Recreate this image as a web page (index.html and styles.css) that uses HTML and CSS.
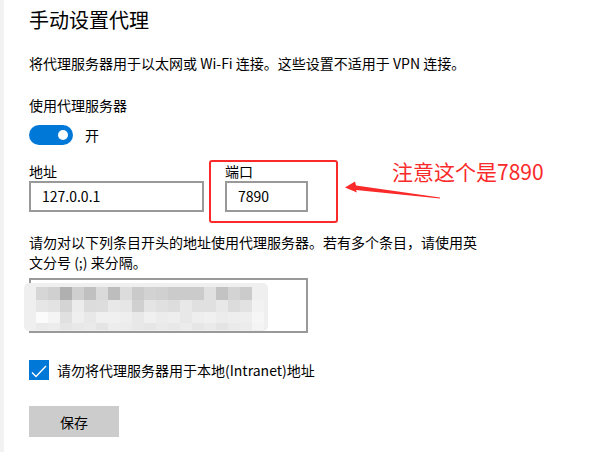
FILE: index.html
```html
<!DOCTYPE html>
<html lang="zh-CN">
<head>
    <meta charset="UTF-8">
    <title>手动设置代理</title>
    <link rel="stylesheet" href="styles.css">
</head>
<body>
<div class="page">
    <h1 class="title">手动设置代理</h1>
    <p class="desc">将代理服务器用于以太网或 Wi-Fi 连接。这些设置不适用于 VPN 连接。</p>

    <div class="label">使用代理服务器</div>
    <div class="toggle-row">
        <span class="toggle"><span class="knob"></span></span>
        <span>开</span>
    </div>

    <div class="fields">
        <div class="field">
            <div class="field-label">地址</div>
            <div class="input address">127.0.0.1</div>
        </div>
        <div class="field port">
            <div class="field-label">端口</div>
            <div class="input port-input">7890</div>
            <div class="mark-box"></div>
        </div>

        <svg class="arrow" width="105" height="30" viewBox="0 0 105 30">
            <polygon points="5,12.5 15,6.5 16,10.5 100,22.6 100,23.6 16,15 17,17.5" fill="#fa2a2a"/>
        </svg>
        <span class="note">注意这个是7890</span>
    </div>

    <p class="desc2">请勿对以下列条目开头的地址使用代理服务器。若有多个条目，请使用英文分号 (;) 来分隔。</p>

    <div class="exceptions">
        <svg class="mosaic" width="246" height="50" viewBox="0 0 246 50">
            <rect x="0" y="1" width="244" height="48" rx="5" fill="#efefef"/>
            <g>
                <rect x="12" y="5" width="12" height="13" fill="#d6d6d6"/>
                <rect x="24" y="5" width="12" height="13" fill="#d0d0d0"/>
                <rect x="36" y="5" width="12" height="13" fill="#b0b0b0"/>
                <rect x="48" y="5" width="12" height="13" fill="#cfcfcf"/>
                <rect x="60" y="5" width="12" height="13" fill="#c0c0c0"/>
                <rect x="72" y="5" width="12" height="13" fill="#dadada"/>
                <rect x="84" y="5" width="12" height="13" fill="#bdbdbd"/>
                <rect x="96" y="5" width="12" height="13" fill="#dcdcdc"/>
                <rect x="108" y="5" width="12" height="13" fill="#cacaca"/>
                <rect x="120" y="5" width="12" height="13" fill="#d2d2d2"/>
                <rect x="132" y="5" width="12" height="13" fill="#d0d0d0"/>
                <rect x="144" y="5" width="12" height="13" fill="#cbcbcb"/>
                <rect x="156" y="5" width="12" height="13" fill="#cbcbcb"/>
                <rect x="168" y="5" width="12" height="13" fill="#cbcbcb"/>
                <rect x="180" y="5" width="12" height="13" fill="#e0e0e0"/>
                <rect x="192" y="5" width="12" height="13" fill="#c3c3c3"/>
                <rect x="204" y="5" width="12" height="13" fill="#d3d3d3"/>
                <rect x="216" y="5" width="12" height="13" fill="#cbcbcb"/>
                <rect x="228" y="5" width="12" height="13" fill="#efefef"/>
            </g>
            <g>
                <rect x="12" y="18" width="12" height="12" fill="#e6e6e6"/>
                <rect x="24" y="18" width="12" height="12" fill="#e3e3e3"/>
                <rect x="36" y="18" width="12" height="12" fill="#d4d4d4"/>
                <rect x="48" y="18" width="12" height="12" fill="#ececec"/>
                <rect x="60" y="18" width="12" height="12" fill="#dcdcdc"/>
                <rect x="72" y="18" width="12" height="12" fill="#dddddd"/>
                <rect x="84" y="18" width="12" height="12" fill="#e8e8e8"/>
                <rect x="96" y="18" width="12" height="12" fill="#e6e6e6"/>
                <rect x="108" y="18" width="12" height="12" fill="#d0d0d0"/>
                <rect x="120" y="18" width="12" height="12" fill="#e4e4e4"/>
                <rect x="132" y="18" width="12" height="12" fill="#e0e0e0"/>
                <rect x="144" y="18" width="12" height="12" fill="#dddddd"/>
                <rect x="156" y="18" width="12" height="12" fill="#e8e8e8"/>
                <rect x="168" y="18" width="12" height="12" fill="#e0e0e0"/>
                <rect x="180" y="18" width="12" height="12" fill="#e0e0e0"/>
                <rect x="192" y="18" width="12" height="12" fill="#e8e8e8"/>
                <rect x="204" y="18" width="12" height="12" fill="#dcdcdc"/>
                <rect x="216" y="18" width="12" height="12" fill="#e2e2e2"/>
                <rect x="228" y="18" width="12" height="12" fill="#f2f2f2"/>
            </g>
            <g>
                <rect x="12" y="30" width="12" height="11" fill="#fbfbfb"/>
                <rect x="24" y="30" width="12" height="11" fill="#f4f4f4"/>
                <rect x="36" y="30" width="12" height="11" fill="#e0e0e0"/>
                <rect x="48" y="30" width="12" height="11" fill="#efefef"/>
                <rect x="60" y="30" width="12" height="11" fill="#e8e8e8"/>
                <rect x="72" y="30" width="12" height="11" fill="#f0f0f0"/>
                <rect x="84" y="30" width="12" height="11" fill="#f0f0f0"/>
                <rect x="96" y="30" width="12" height="11" fill="#eeeeee"/>
                <rect x="108" y="30" width="12" height="11" fill="#e8e8e8"/>
                <rect x="120" y="30" width="12" height="11" fill="#f0f0f0"/>
                <rect x="132" y="30" width="12" height="11" fill="#ececec"/>
                <rect x="144" y="30" width="12" height="11" fill="#eeeeee"/>
                <rect x="156" y="30" width="12" height="11" fill="#e8e8e8"/>
                <rect x="168" y="30" width="12" height="11" fill="#eeeeee"/>
                <rect x="180" y="30" width="12" height="11" fill="#f0f0f0"/>
                <rect x="192" y="30" width="12" height="11" fill="#ececec"/>
                <rect x="204" y="30" width="12" height="11" fill="#eeeeee"/>
                <rect x="216" y="30" width="12" height="11" fill="#eeeeee"/>
                <rect x="228" y="30" width="12" height="11" fill="#f6f6f6"/>
            </g>
            <g>
                <rect x="12" y="41" width="12" height="7" fill="#eaeaea"/>
                <rect x="24" y="41" width="12" height="7" fill="#ececec"/>
                <rect x="36" y="41" width="12" height="7" fill="#e5e5e5"/>
                <rect x="48" y="41" width="12" height="7" fill="#e8e8e8"/>
                <rect x="60" y="41" width="12" height="7" fill="#eaeaea"/>
                <rect x="72" y="41" width="12" height="7" fill="#e4e4e4"/>
                <rect x="84" y="41" width="12" height="7" fill="#ededed"/>
                <rect x="96" y="41" width="12" height="7" fill="#ececec"/>
                <rect x="108" y="41" width="12" height="7" fill="#e8e8e8"/>
                <rect x="120" y="41" width="12" height="7" fill="#e6e6e6"/>
                <rect x="132" y="41" width="12" height="7" fill="#eaeaea"/>
                <rect x="144" y="41" width="12" height="7" fill="#e8e8e8"/>
                <rect x="156" y="41" width="12" height="7" fill="#ececec"/>
                <rect x="168" y="41" width="12" height="7" fill="#e6e6e6"/>
                <rect x="180" y="41" width="12" height="7" fill="#eaeaea"/>
                <rect x="192" y="41" width="12" height="7" fill="#e4e4e4"/>
                <rect x="204" y="41" width="12" height="7" fill="#eaeaea"/>
                <rect x="216" y="41" width="12" height="7" fill="#ececec"/>
                <rect x="228" y="41" width="12" height="7" fill="#f4f4f4"/>
            </g>
        </svg>
    </div>

    <div class="check-row">
        <span class="checkbox">
            <svg width="20" height="20" viewBox="0 0 20 20">
                <polyline points="3,12.5 7,16.5 17,6" fill="none" stroke="#fff" stroke-width="1.4"/>
            </svg>
        </span>
        <span>请勿将代理服务器用于本地(Intranet)地址</span>
    </div>

    <button class="save">保存</button>
</div>
</body>
</html>
```

FILE: styles.css
```css
body {
    margin: 0;
    background-color: #fff;
    font-family: "Noto Sans CJK SC", "Noto Sans", sans-serif;
    font-size: 14px;
    color: #000;
}

.page {
    height: 452px;
    box-sizing: border-box;
    border-left: 4px solid #f2f2f2;
    padding-left: 25px;
    overflow: hidden;
}

.title {
    margin: 6px 0 0;
    font-size: 20px;
    font-weight: normal;
    line-height: 28px;
}

.desc {
    margin: 19px 0 0;
    line-height: 20px;
}

.label {
    margin-top: 22px;
    line-height: 20px;
}

.toggle-row {
    display: flex;
    align-items: center;
    gap: 12px;
    margin-top: 10px;
    height: 20px;
}

.toggle {
    display: flex;
    justify-content: flex-end;
    align-items: center;
    width: 44px;
    height: 20px;
    box-sizing: border-box;
    padding-right: 5px;
    border-radius: 10px;
    background-color: #0078d7;
}

.knob {
    width: 10px;
    height: 10px;
    border-radius: 50%;
    background-color: #fff;
}

/* --- address / port --- */
.fields {
    display: flex;
    gap: 21px;
    margin-top: 16px;
    position: relative;
}

.field {
    position: relative;
}

.field-label {
    line-height: 20px;
}

.input {
    height: 31px;
    box-sizing: border-box;
    border: 2px solid #999;
    padding-left: 11px;
    line-height: 27px;
}

.address {
    width: 175px;
}

.port-input {
    width: 83px;
}

/* annotation drawn over the screenshot */
.mark-box {
    position: absolute;
    left: -16px;
    top: -1px;
    width: 129px;
    height: 63px;
    box-sizing: border-box;
    border: 2px solid #fa2a2a;
    border-radius: 3px;
}

.arrow {
    position: absolute;
    left: 311px;
    top: 14px;
}

.note {
    position: absolute;
    left: 363px;
    top: -2px;
    font-size: 21px;
    line-height: 24px;
    color: #fa2a2a;
}

.desc2 {
    width: 455px;
    margin: 20px 0 0;
    line-height: 20px;
}

.exceptions {
    position: relative;
    width: 279px;
    height: 55px;
    box-sizing: border-box;
    margin-top: 6px;
    border: 2px solid #999;
}

.mosaic {
    position: absolute;
    left: -7px;
    top: 2px;
}

.check-row {
    display: flex;
    align-items: center;
    gap: 8px;
    margin-top: 27px;
    height: 20px;
}

.checkbox {
    width: 20px;
    height: 20px;
    background-color: #0078d7;
}

.checkbox svg {
    display: block;
}

.save {
    display: block;
    margin-top: 26px;
    width: 90px;
    height: 31px;
    border: none;
    background-color: #ccc;
    font-family: inherit;
    font-size: 14px;
    color: #000;
    padding: 0;
}
```
